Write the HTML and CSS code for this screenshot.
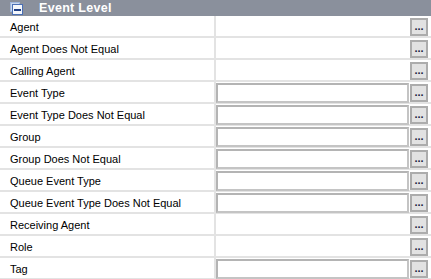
FILE: index.html
```html
<!DOCTYPE html>
<html lang="en">
<head>
    <meta charset="UTF-8">
    <title>Event Level</title>
    <link rel="stylesheet" href="styles.css">
</head>
<body>
    <div class="grid">
        <div class="group-header">
            <svg class="collapse-icon" width="13" height="13" viewBox="0 0 13 13">
                <rect x="0.5" y="0.5" width="9" height="9" fill="#c9d8ef" stroke="#9fb6dc"/>
                <rect x="2.5" y="2.5" width="10" height="10" fill="#f4f7fc" stroke="#4a6fb5"/>
                <rect x="4" y="7" width="7" height="2" fill="#1f3f86"/>
            </svg>
            <span>Event Level</span>
        </div>

        <div class="row"><div class="label">Agent</div><div class="value"><div class="spacer"></div><button class="dots">...</button></div></div>
        <div class="row"><div class="label">Agent Does Not Equal</div><div class="value"><div class="spacer"></div><button class="dots">...</button></div></div>
        <div class="row"><div class="label">Calling Agent</div><div class="value"><div class="spacer"></div><button class="dots">...</button></div></div>
        <div class="row"><div class="label">Event Type</div><div class="value"><input class="box" type="text"><button class="dots">...</button></div></div>
        <div class="row"><div class="label">Event Type Does Not Equal</div><div class="value"><input class="box" type="text"><button class="dots">...</button></div></div>
        <div class="row"><div class="label">Group</div><div class="value"><input class="box" type="text"><button class="dots">...</button></div></div>
        <div class="row"><div class="label">Group Does Not Equal</div><div class="value"><input class="box" type="text"><button class="dots">...</button></div></div>
        <div class="row"><div class="label">Queue Event Type</div><div class="value"><input class="box" type="text"><button class="dots">...</button></div></div>
        <div class="row"><div class="label">Queue Event Type Does Not Equal</div><div class="value"><input class="box" type="text"><button class="dots">...</button></div></div>
        <div class="row"><div class="label">Receiving Agent</div><div class="value"><div class="spacer"></div><button class="dots">...</button></div></div>
        <div class="row"><div class="label">Role</div><div class="value"><div class="spacer"></div><button class="dots">...</button></div></div>
        <div class="row"><div class="label">Tag</div><div class="value"><input class="box" type="text"><button class="dots">...</button></div></div>
    </div>
</body>
</html>
```

FILE: styles.css
```css
body {
    margin: 0;
    background: #ffffff;
    font-family: "Liberation Sans", Arial, sans-serif;
    font-size: 11px;
    color: #000000;
}
.grid {
    width: 431px;
}
.group-header {
    height: 16px;
    background: #8a909c;
    display: flex;
    align-items: center;
    color: #ffffff;
    font-weight: bold;
    font-size: 12.5px;
    letter-spacing: 0.3px;
}
.collapse-icon {
    margin-left: 10px;
    margin-right: 16px;
}
.row {
    display: flex;
    height: 20px;
    border-bottom: 2px solid #e3e3e3;
}
.label {
    width: 204px;
    padding: 2px 0 0 10px;
    box-sizing: content-box;
    height: 18px;
    border-right: 2px solid #e3e3e3;
    display: flex;
    align-items: center;
}
.value {
    flex: 1;
    display: flex;
    align-items: center;
    padding-right: 3px;
}
.spacer {
    flex: 1;
}
.box {
    flex: 1;
    min-width: 0;
    height: 20px;
    box-sizing: border-box;
    margin: 2px 1px 0 0;
    border: 2px solid #b4b4b4;
    border-right-color: #c4c4c4;
    border-bottom-color: #c4c4c4;
    background: #ffffff;
    padding: 0;
}
.dots {
    width: 18px;
    height: 18px;
    margin-top: 2px;
    padding: 0 0 3px 0;
    box-sizing: border-box;
    background: #e2e2e2;
    border: 2px solid #acacac;
    font-family: "Liberation Sans", Arial, sans-serif;
    font-size: 11px;
    font-weight: bold;
    line-height: 10px;
    color: #1a1a40;
    display: flex;
    align-items: flex-end;
    justify-content: center;
}
```
